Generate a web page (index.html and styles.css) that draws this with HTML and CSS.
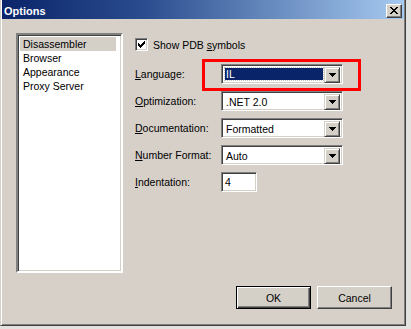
FILE: index.html
```html
<!DOCTYPE html>
<html>
<head>
<meta charset="utf-8">
<title>Options</title>
<link rel="stylesheet" href="styles.css">
</head>
<body>
<div class="window">
  <div class="titlebar">
    <span class="title">Options</span>
    <span class="close"><svg width="8" height="7" viewBox="0 0 8 7"><path fill="#000" d="M0 0h2v1H0zM6 0h2v1H6zM1 1h2v1H1zM5 1h2v1H5zM2 2h4v1H2zM3 3h2v1H3zM2 4h4v1H2zM1 5h2v1H1zM5 5h2v1H5zM0 6h2v1H0zM6 6h2v1H6z"/></svg></span>
  </div>
  <div class="content">
    <div class="main">
      <ul class="listbox">
        <li class="sel">Disassembler</li>
        <li>Browser</li>
        <li>Appearance</li>
        <li>Proxy Server</li>
      </ul>
      <div class="panel">
        <div class="check">
          <span class="box"><svg width="7" height="7" viewBox="0 0 7 7"><path fill="#000" d="M6 0h1v3H6zM5 1h1v3H5zM4 2h1v3H4zM3 3h1v3H3zM2 4h1v3H2zM1 3h1v3H1zM0 2h1v3H0z"/></svg></span>
          <span>Show PDB <u>s</u>ymbols</span>
        </div>
        <div class="form">
          <span class="lbl"><u>L</u>anguage:</span>
          <div class="combo"><span class="value focus"><span class="hl">IL</span></span><span class="drop"><svg width="7" height="4" viewBox="0 0 7 4"><path fill="#000" d="M0 0h7v1H0zM1 1h5v1H1zM2 2h3v1H2zM3 3h1v1H3z"/></svg></span></div>
          <span class="lbl"><u>O</u>ptimization:</span>
          <div class="combo"><span class="value">.NET 2.0</span><span class="drop"><svg width="7" height="4" viewBox="0 0 7 4"><path fill="#000" d="M0 0h7v1H0zM1 1h5v1H1zM2 2h3v1H2zM3 3h1v1H3z"/></svg></span></div>
          <span class="lbl"><u>D</u>ocumentation:</span>
          <div class="combo"><span class="value">Formatted</span><span class="drop"><svg width="7" height="4" viewBox="0 0 7 4"><path fill="#000" d="M0 0h7v1H0zM1 1h5v1H1zM2 2h3v1H2zM3 3h1v1H3z"/></svg></span></div>
          <span class="lbl"><u>N</u>umber Format:</span>
          <div class="combo"><span class="value">Auto</span><span class="drop"><svg width="7" height="4" viewBox="0 0 7 4"><path fill="#000" d="M0 0h7v1H0zM1 1h5v1H1zM2 2h3v1H2zM3 3h1v1H3z"/></svg></span></div>
          <span class="lbl"><u>I</u>ndentation:</span>
          <div class="textbox">4</div>
        </div>
      </div>
    </div>
    <div class="buttons">
      <span class="btn default"><span class="face">OK</span></span>
      <span class="btn"><span class="face">Cancel</span></span>
    </div>
  </div>
</div>
<div class="annot"></div>
</body>
</html>
```
FILE: styles.css
```css
html, body {
  margin: 0;
  padding: 0;
}
body {
  width: 411px;
  height: 329px;
  overflow: hidden;
  background: #e4e2de;
  font-family: "Liberation Sans", Arial, sans-serif;
  font-size: 10.5px;
  color: #000;
}
.window {
  width: 406px;
  height: 326px;
  box-sizing: border-box;
  background: #d6d0c9;
  border-left: 1px solid #d4d0c8;
  border-right: 1px solid #404040;
  border-bottom: 1px solid #404040;
  box-shadow: inset 1px 0 #ffffff, inset -1px -1px #808080;
  padding: 0 1px 1px 1px;
  display: flex;
  flex-direction: column;
}
.titlebar {
  height: 19px;
  flex: none;
  background: linear-gradient(to right, #0a246a 0%, #2a4c8e 35%, #a6caf0 100%);
  display: flex;
  align-items: flex-start;
  justify-content: space-between;
  padding: 0 2px 0 2px;
}
.title {
  color: #fff;
  font-weight: bold;
  font-size: 11px;
  line-height: 14px;
  margin-top: 4px;
  padding-left: 0;
}
.close {
  width: 16px;
  height: 14px;
  margin-top: 4px;
  box-sizing: border-box;
  background: #d4d0c8;
  border: 1px solid;
  border-color: #ffffff #404040 #404040 #ffffff;
  box-shadow: inset -1px -1px #808080;
  display: flex;
  align-items: center;
  justify-content: center;
  padding-bottom: 1px;
}
.close svg { display: block; }
.content {
  flex: 1;
  display: flex;
  flex-direction: column;
  padding: 14px 12px 0 14px;
}
.main {
  display: flex;
  gap: 12px;
}
.listbox {
  list-style: none;
  margin: 0;
  width: 107px;
  height: 240px;
  box-sizing: border-box;
  background: #fff;
  border: 2px solid;
  border-color: #808080 #ffffff #ffffff #808080;
  box-shadow: inset 1px 1px #404040, inset -1px -1px #d4d0c8;
  padding: 2px 2px;
}
.listbox li {
  line-height: 14px;
  height: 14px;
  padding-left: 3px;
  margin-right: 3px;
}
.listbox li.sel {
  background: #d4d0c8;
}
.panel {
  padding-top: 5px;
  display: flex;
  flex-direction: column;
}
.check {
  display: flex;
  align-items: center;
  gap: 5px;
  height: 13px;
  margin-bottom: 13px;
}
.box {
  width: 13px;
  height: 13px;
  box-sizing: border-box;
  background: #fff;
  border: 1px solid;
  border-color: #808080 #ffffff #ffffff #808080;
  box-shadow: inset 1px 1px #404040, inset -1px -1px #d4d0c8;
  display: flex;
  align-items: center;
  justify-content: center;
}
.box svg { display: block; }
.form {
  display: grid;
  grid-template-columns: 86px auto;
  grid-auto-rows: 20px;
  row-gap: 7px;
  align-items: center;
  justify-items: start;
}
.combo, .textbox {
  height: 20px;
  box-sizing: border-box;
  background: #fff;
  border: 1px solid;
  border-color: #808080 #ffffff #ffffff #808080;
  box-shadow: inset 1px 1px #404040, inset -1px -1px #d4d0c8;
  padding: 2px;
}
.combo {
  width: 122px;
  display: flex;
}
.value {
  flex: 1;
  line-height: 16px;
  padding-left: 2px;
  white-space: nowrap;
}
.value.focus {
  padding: 1px;
  display: flex;
}
.hl {
  flex: 1;
  background: #0a246a;
  color: #fff;
  line-height: 12px;
  padding-left: 1px;
  outline: 1px dotted #c8c4bc;
  outline-offset: 0;
}
.drop {
  width: 16px;
  height: 16px;
  box-sizing: border-box;
  background: #d4d0c8;
  border: 1px solid;
  border-color: #d4d0c8 #404040 #404040 #d4d0c8;
  box-shadow: inset 1px 1px #ffffff, inset -1px -1px #808080;
  display: flex;
  align-items: center;
  justify-content: center;
}
.drop svg { display: block; }
.textbox {
  width: 36px;
  line-height: 14px;
  padding-left: 3px;
}
.buttons {
  margin-top: 13px;
  display: flex;
  justify-content: flex-end;
  gap: 6px;
}
.btn {
  width: 75px;
  height: 23px;
  box-sizing: border-box;
  background: #d4d0c8;
  border: 1px solid;
  border-color: #ffffff #404040 #404040 #ffffff;
  box-shadow: inset -1px -1px #808080;
  display: flex;
  align-items: center;
  justify-content: center;
}
.btn.default {
  border: 1px solid #000;
  box-shadow: inset 1px 1px #ffffff, inset -1px -1px #404040, inset -2px -2px #808080;
}
.face {
  line-height: 14px;
}
.annot {
  position: absolute;
  left: 202px;
  top: 59px;
  width: 159px;
  height: 32px;
  box-sizing: border-box;
  border: 3px solid #ff0000;
}
```
